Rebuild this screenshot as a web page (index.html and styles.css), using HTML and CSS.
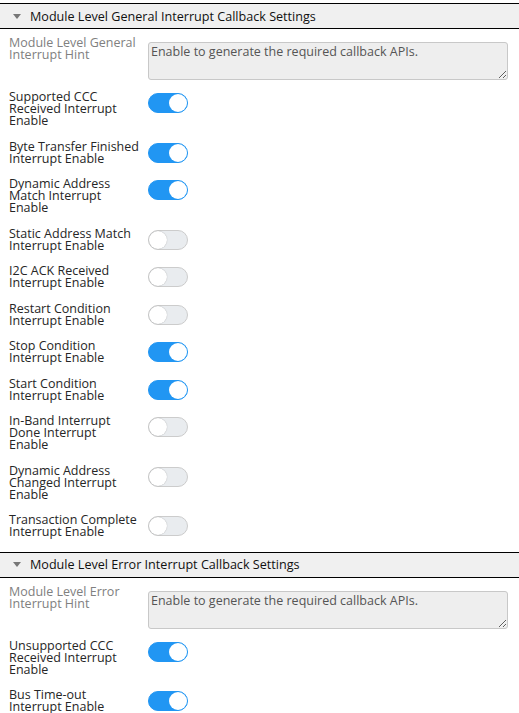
FILE: index.html
```html
<!DOCTYPE html>
<html lang="en">
<head>
  <meta charset="UTF-8">
  <title>Interrupt Callback Settings</title>
  <link rel="stylesheet" href="styles.css">
</head>
<body>

  <div class="panel">
    <!-- General interrupts -->
    <div class="section-head"><span class="caret"></span>Module Level General Interrupt Callback Settings</div>
    <div class="section-body">
      <div class="row hint">
        <label>Module Level General Interrupt Hint</label>
        <textarea readonly>Enable to generate the required callback APIs.</textarea>
      </div>
      <div class="row"><label>Supported CCC Received Interrupt Enable</label><span class="switch on"></span></div>
      <div class="row"><label><span class="nb">Byte Transfer Finished</span> Interrupt Enable</label><span class="switch on"></span></div>
      <div class="row"><label>Dynamic Address Match Interrupt Enable</label><span class="switch on"></span></div>
      <div class="row"><label>Static Address Match Interrupt Enable</label><span class="switch"></span></div>
      <div class="row"><label>I2C ACK Received Interrupt Enable</label><span class="switch"></span></div>
      <div class="row"><label>Restart Condition Interrupt Enable</label><span class="switch"></span></div>
      <div class="row"><label>Stop Condition Interrupt Enable</label><span class="switch on"></span></div>
      <div class="row"><label>Start Condition Interrupt Enable</label><span class="switch on"></span></div>
      <div class="row"><label>In-Band Interrupt Done Interrupt Enable</label><span class="switch"></span></div>
      <div class="row"><label>Dynamic Address Changed Interrupt Enable</label><span class="switch"></span></div>
      <div class="row"><label>Transaction Complete Interrupt Enable</label><span class="switch"></span></div>
    </div>

    <!-- Error interrupts -->
    <div class="section-head"><span class="caret"></span>Module Level Error Interrupt Callback Settings</div>
    <div class="section-body">
      <div class="row hint">
        <label>Module Level Error Interrupt Hint</label>
        <textarea readonly>Enable to generate the required callback APIs.</textarea>
      </div>
      <div class="row"><label>Unsupported CCC Received Interrupt Enable</label><span class="switch on"></span></div>
      <div class="row"><label>Bus Time-out Interrupt Enable</label><span class="switch on"></span></div>
    </div>
  </div>

</body>
</html>
```

FILE: styles.css
```css
html, body {
  margin: 0; padding: 0;
  background: #fff;
  font-family: "Open Sans", "Liberation Sans", sans-serif;
  font-size: 12.5px;
  color: #262626;
}
.panel { padding-top: 3px; }

.section-head {
  display: flex; align-items: center;
  height: 24px;
  border-top: 1px solid #000; border-bottom: 1px solid #000;
  background: #f0f0f0;
  color: #111;
  font-size: 12.6px;
}
.caret {
  width: 0; height: 0;
  margin: 0 9px 0 13px;
  border-left: 4px solid transparent;
  border-right: 4px solid transparent;
  border-top: 5px solid #777;
}

.section-body { padding-top: 8px; }

.row {
  display: grid;
  grid-template-columns: 139px 1fr;
  align-items: start;
  padding: 0 11px 0 9px;
  margin-bottom: 13.5px;
}
.row label {
  line-height: 12px;
  padding-right: 10px;
}
.row label .nb { white-space: nowrap; }
.row.hint { margin-bottom: 11px; }
.row.hint label { color: #808080; }

textarea {
  margin: 5px 0 0;
  box-sizing: border-box;
  height: 38px; width: 100%;
  padding: 1px 2px;
  border: 1px solid #c8c8c8; border-radius: 3px;
  background: #eee;
  color: #555;
  font: 12.5px/15px "Open Sans", "Liberation Sans", sans-serif;
}

.switch {
  position: relative;
  display: block;
  box-sizing: border-box;
  width: 40px; height: 20px;
  margin-top: 2px;
  border-radius: 10px;
  border: 1px solid #ccc;
  background: #e9ecef;
}
.switch::after {
  content: "";
  position: absolute; top: 0; left: 0;
  width: 18px; height: 18px;
  border-radius: 50%;
  background: #fff;
  box-shadow: 0 0 1px rgba(0,0,0,0.35);
}
.switch.on { background: #2196f3; border-color: #2196f3; }
.switch.on::after { left: auto; right: 0; box-shadow: none; }
```
